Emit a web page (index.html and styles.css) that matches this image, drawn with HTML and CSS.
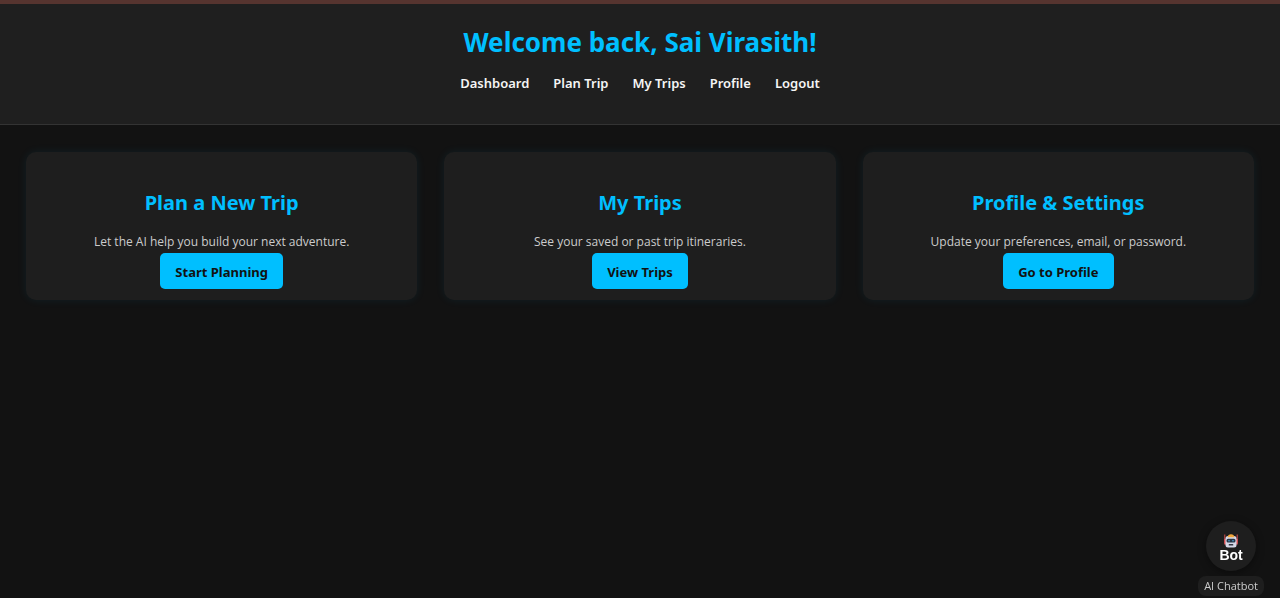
FILE: index.html
```html
<!DOCTYPE html>
<html lang="en">
<head>
<meta charset="utf-8">
<meta name="viewport" content="width=device-width, initial-scale=1">
<title>Trip Dashboard</title>
<link rel="stylesheet" href="styles.css">
</head>
<body>
<header class="header">
  <h1 class="welcome">Welcome back, Sai Virasith!</h1>
  <nav class="nav">
    <a href="#dashboard">Dashboard</a>
    <a href="#plan">Plan Trip</a>
    <a href="#trips">My Trips</a>
    <a href="#profile">Profile</a>
    <a href="#logout">Logout</a>
  </nav>
</header>
<main class="cards">
  <section class="card">
    <h2>Plan a New Trip</h2>
    <p>Let the AI help you build your next adventure.</p>
    <a class="btn" href="#plan">Start Planning</a>
  </section>
  <section class="card">
    <h2>My Trips</h2>
    <p>See your saved or past trip itineraries.</p>
    <a class="btn" href="#trips">View Trips</a>
  </section>
  <section class="card">
    <h2>Profile &amp; Settings</h2>
    <p>Update your preferences, email, or password.</p>
    <a class="btn" href="#profile">Go to Profile</a>
  </section>
</main>
<div class="chat">
  <button class="chat-btn" type="button" aria-describedby="chat-label">
    <svg class="robot" viewBox="0 0 14 14" aria-hidden="true">
      <path d="M.8 .5v9M13.200 .5v9" stroke="#d94a4a" stroke-width="1"/>
      <path d="M0.300 5h1.900v5.500H0.300zM11.800 5h1.900v5.500h-1.900z" fill="#e0565b"/>
      <path d="M1.500 4.500Q1.500 2 4 2h6q2.500 0 2.500 2.500V11q0 2.500-2.500 2.500H4Q1.500 13.500 1.500 11z" fill="#d5d8e8"/>
      <path d="M3.500 3.200Q4 .3 7 .3t3.500 2.900z" fill="#f2a73b"/>
      <rect x="2.500" y="4.800" width="9" height="3.800" rx="1.500" fill="#263445"/>
      <circle cx="5" cy="6.700" r=".8" fill="#4aa8d8"/>
      <circle cx="9" cy="6.700" r=".8" fill="#4aa8d8"/>
      <rect x="4.700" y="10" width="4.600" height="1.600" rx=".6" fill="#343643"/>
    </svg>
    <span>Bot</span>
  </button>
  <span class="chat-label" id="chat-label">AI Chatbot</span>
</div>
</body>
</html>
```
FILE: styles.css
```css
* { box-sizing: border-box; }
body {
  margin: 0;
  min-height: 100vh;
  background: #121212;
  color: #f5f5f5;
  font-family: "Segoe UI", "Noto Sans", "Open Sans", sans-serif;
  font-size: 13px;
  line-height: 18px;
}
a { color: inherit; text-decoration: none; }
.header {
  padding: 20px 27px 32px;
  border-top: 4px solid #56342f;
  border-bottom: 1px solid #333;
  background: #1f1f1f;
  text-align: center;
}
.welcome {
  margin: 0 0 14px;
  color: #00bfff;
  font-size: 26px;
  line-height: 36px;
  font-weight: 700;
}
.nav {
  display: flex;
  flex-wrap: wrap;
  justify-content: center;
  gap: 24px;
  font-weight: 600;
}
.cards {
  display: grid;
  grid-template-columns: repeat(auto-fit, minmax(240px, 1fr));
  gap: 27px;
  padding: 27px 26px;
}
.card {
  display: flex;
  flex-direction: column;
  align-items: center;
  padding: 37px 20px 11px;
  border-radius: 10px;
  background: #1e1e1e;
  box-shadow: 0 0 10px rgba(0, 191, 255, 0.08);
  text-align: center;
}
.card h2 {
  margin: 0 0 16px;
  color: #00bfff;
  font-size: 20px;
  line-height: 28px;
  font-weight: 700;
}
.card p {
  margin: 0 0 2px;
  color: #ccc;
  font-family: "Segoe UI", "Open Sans", sans-serif;
  font-size: 12px;
}
.btn {
  padding: 10px 15px 8px;
  border-radius: 5px;
  background: #00bfff;
  color: #121212;
  font-weight: 700;
}
.chat {
  position: fixed;
  right: 16px;
  bottom: 2px;
  display: flex;
  flex-direction: column;
  align-items: center;
  gap: 5px;
}
.chat-btn {
  display: flex;
  flex-direction: column;
  align-items: center;
  justify-content: center;
  width: 50px;
  height: 50px;
  padding: 4px 0 0;
  border: 0;
  border-radius: 50%;
  background: #1e1e1e;
  box-shadow: 0 2px 8px rgba(0, 0, 0, 0.4);
  color: #fff;
  font: 700 14px/15px "Liberation Sans", Arial, sans-serif;
}
.robot { width: 14px; height: 14px; }
.chat-label {
  padding: 1px 6px;
  border-radius: 8px;
  background: #1e1e1e;
  color: #ccc;
  font-family: "Segoe UI", "Open Sans", sans-serif;
  font-size: 11px;
}
```
